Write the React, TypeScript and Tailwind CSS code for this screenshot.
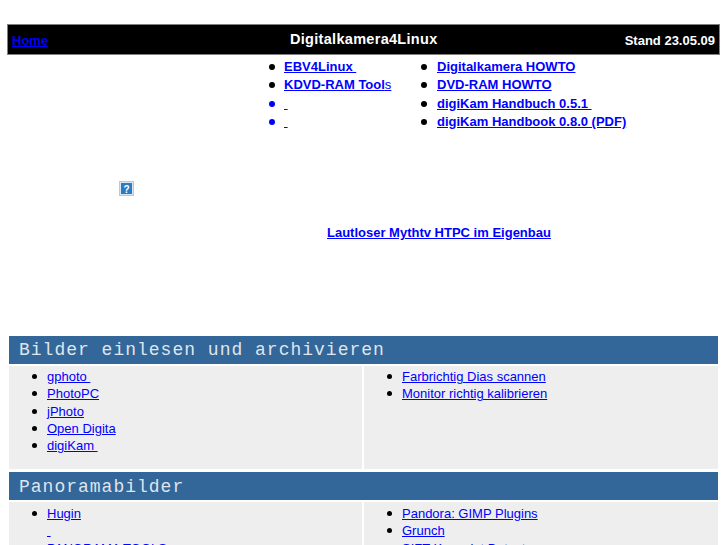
import React from "react";

const linkClass = "text-[#0000ff] underline";

const ListItem: React.FC<{ children: React.ReactNode; bullet?: string; gap?: string }> = ({
  children,
  bullet = "bg-black",
  gap = "ml-[9px]",
}) => (
  <li className="flex items-center">
    <span className={`w-[6px] h-[6px] rounded-full shrink-0 ${bullet}`} />
    <a href="#" className={`${gap} ${linkClass} whitespace-pre`}>
      {children}
    </a>
  </li>
);

const CellList: React.FC<{ items: string[]; pad: string }> = ({ items, pad }) => (
  <ul className={`flex flex-col pl-[23px] ${pad}`}>
    {items.map((item, i) => (
      <li key={i} className="flex items-center h-[17.25px] leading-[17px]">
        {/* a blank row in the original has only the underlined space, no bullet */}
        <span className={`w-[5px] h-[5px] rounded-full shrink-0 ${item === " " ? "bg-transparent" : "bg-black"}`} />
        <a href="#" className={`ml-[10px] ${linkClass} whitespace-pre`}>
          {item}
        </a>
      </li>
    ))}
  </ul>
);

const Section: React.FC<{ title: string; left: string[]; right: string[]; leading: string; pad: string }> = ({
  title,
  left,
  right,
  leading,
  pad,
}) => (
  <section className="mb-[3px]">
    <h2 className={`h-[28px] bg-[#336699] text-[#dfe5ec] font-['Liberation_Mono',monospace] text-[18px] tracking-[1px] pl-[10px] whitespace-pre ${leading}`}>
      {title}
    </h2>
    <div className="flex gap-[2px] mt-[2px] text-[13px] h-[103px]">
      <div className="w-[353px] bg-[#eeeeee]">
        <CellList items={left} pad={pad} />
      </div>
      <div className="flex-1 bg-[#eeeeee]">
        <CellList items={right} pad={pad} />
      </div>
    </div>
  </section>
);

const HelpIcon = () => (
  <svg width="15" height="15" viewBox="0 0 15 15">
    <rect x="0.5" y="0.5" width="14" height="14" fill="#dbe6f3" stroke="#b5c8e2" />
    <rect x="2" y="2" width="11" height="11" fill="#2b7cc4" />
    <text x="7.5" y="11.5" textAnchor="middle" fontSize="10" fontWeight="700" fill="#ffffff" fontFamily="Liberation Sans, sans-serif">
      ?
    </text>
  </svg>
);

export default function App() {
  return (
    <div className="h-[545px] overflow-hidden bg-white pt-[24px] font-['Liberation_Sans',Arial,sans-serif]">
      <header className="mx-[7px] h-[31px] bg-black border border-[#808080] flex items-center text-white font-bold relative">
        <a href="#" className={`ml-[4px] mt-[2px] text-[13px] ${linkClass}`}>
          Home
        </a>
        <h1 className="absolute left-[282px] top-[4px] text-[14.5px] leading-[20px] tracking-[0.3px]">Digitalkamera4Linux</h1>
        <span className="ml-auto mr-[4px] mt-[2px] text-[13px]">Stand 23.05.09</span>
      </header>

      <div className="flex h-[281px] text-[13px] font-bold">
        <div className="w-[119px]" />
        <div className="w-[15px] mt-[126px]">
          <HelpIcon />
        </div>
        <div className="flex-1 pl-[135px] pt-[3px]">
          <div className="flex">
            <ul className="w-[152px] flex flex-col gap-[0.3px] leading-[18px]">
              <ListItem>EBV4Linux </ListItem>
              <ListItem>
                KDVD-RAM Tool<span className="font-normal">s</span>
              </ListItem>
              <ListItem bullet="bg-[#0000ff]"> </ListItem>
              <ListItem bullet="bg-[#0000ff]"> </ListItem>
            </ul>
            <ul className="flex flex-col gap-[0.3px] leading-[18px]">
              <ListItem gap="ml-[10px]">Digitalkamera HOWTO</ListItem>
              <ListItem gap="ml-[10px]">DVD-RAM HOWTO</ListItem>
              <ListItem gap="ml-[10px]">digiKam Handbuch 0.5.1 </ListItem>
              <ListItem gap="ml-[10px]">digiKam Handbook 0.8.0 (PDF)</ListItem>
            </ul>
          </div>
          <a href="#" className={`block mt-[92px] ml-[58px] ${linkClass}`}>
            Lautloser Mythtv HTPC im Eigenbau
          </a>
        </div>
      </div>

      <div className="mx-[9px]">
        <Section
          title="Bilder einlesen und archivieren"
          left={["gphoto ", "PhotoPC", "jPhoto", "Open Digita", "digiKam "]}
          right={["Farbrichtig Dias scannen", "Monitor richtig kalibrieren"]}
          leading="leading-[29px]"
          pad="pt-[2px]"
        />
        <Section
          title="Panoramabilder"
          left={["Hugin", " ", "PANORAMA TOOLS"]}
          right={["Pandora: GIMP Plugins", "Grunch", "SIFT Keypoint Detector"]}
          leading="leading-[31px]"
          pad="pt-[3px]"
        />
      </div>
    </div>
  );
}
